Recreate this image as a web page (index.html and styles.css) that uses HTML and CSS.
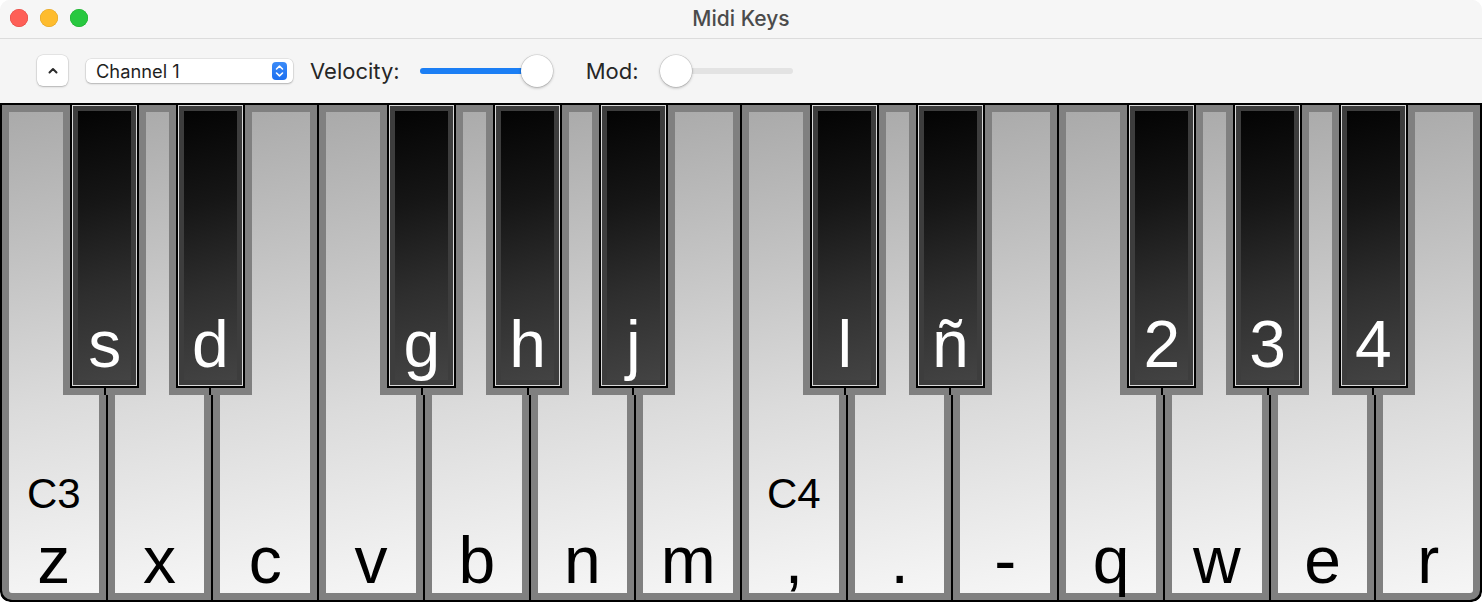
FILE: index.html
```html
<!DOCTYPE html>
<html>
<head>
<meta charset="utf-8">
<title>Midi Keys</title>
<link rel="stylesheet" href="styles.css">
</head>
<body>
<div class="window">
  <div class="titlebar">
    <div class="lights">
      <span class="light red"></span>
      <span class="light yellow"></span>
      <span class="light green"></span>
    </div>
    <div class="title">Midi Keys</div>
    <div></div>
  </div>
  <div class="toolbar">
    <button class="collapse" type="button">
      <svg width="10" height="7" viewBox="0 0 10 7"><path d="M1.5 5.5 L5 2 L8.5 5.5" fill="none" stroke="#2b2b2b" stroke-width="2" stroke-linecap="round" stroke-linejoin="round"/></svg>
    </button>
    <div class="popup">
      <span class="popup-text">Channel 1</span>
      <span class="stepper">
        <svg width="15" height="18" viewBox="0 0 15 18"><path d="M4.5 7 L7.5 4.2 L10.5 7" fill="none" stroke="#fff" stroke-width="1.6" stroke-linecap="round" stroke-linejoin="round"/><path d="M4.5 11 L7.5 13.8 L10.5 11" fill="none" stroke="#fff" stroke-width="1.6" stroke-linecap="round" stroke-linejoin="round"/></svg>
      </span>
    </div>
    <span class="label">Velocity:</span>
    <div class="slider">
      <div class="track"><div class="fill"></div></div>
      <div class="knob knob-end"></div>
    </div>
    <span class="label label-mod">Mod:</span>
    <div class="slider">
      <div class="track"></div>
      <div class="knob knob-start"></div>
    </div>
  </div>
  <div class="keyboard">
    <div class="white">
      <div class="bk"><div class="bk-body"><span>s</span></div></div>
      <span class="octave">C3</span><span class="key">z</span>
    </div>
    <div class="white">
      <div class="bk"><div class="bk-body"><span>d</span></div></div>
      <span class="key">x</span>
    </div>
    <div class="white"><span class="key">c</span></div>
    <div class="white">
      <div class="bk"><div class="bk-body"><span>g</span></div></div>
      <span class="key">v</span>
    </div>
    <div class="white">
      <div class="bk"><div class="bk-body"><span>h</span></div></div>
      <span class="key">b</span>
    </div>
    <div class="white">
      <div class="bk"><div class="bk-body"><span>j</span></div></div>
      <span class="key">n</span>
    </div>
    <div class="white"><span class="key">m</span></div>
    <div class="white">
      <div class="bk"><div class="bk-body"><span>l</span></div></div>
      <span class="octave">C4</span><span class="key">,</span>
    </div>
    <div class="white">
      <div class="bk"><div class="bk-body"><span>ñ</span></div></div>
      <span class="key">.</span>
    </div>
    <div class="white"><span class="key">-</span></div>
    <div class="white">
      <div class="bk"><div class="bk-body"><span>2</span></div></div>
      <span class="key">q</span>
    </div>
    <div class="white">
      <div class="bk"><div class="bk-body"><span>3</span></div></div>
      <span class="key">w</span>
    </div>
    <div class="white">
      <div class="bk"><div class="bk-body"><span>4</span></div></div>
      <span class="key">e</span>
    </div>
    <div class="white"><span class="key">r</span></div>
  </div>
</div>
</body>
</html>
```

FILE: styles.css
```css
* { box-sizing: border-box; }

html, body {
  margin: 0;
  padding: 0;
  background: #ffffff;
}

.window {
  width: 1482px;
  height: 602px;
  border-radius: 10px;
  overflow: hidden;
  background: #f5f5f5;
  display: flex;
  flex-direction: column;
  font-family: Inter, "Noto Sans", sans-serif;
}

/* Title bar */
.titlebar {
  height: 39px;
  flex: none;
  display: grid;
  grid-template-columns: 1fr auto 1fr;
  align-items: center;
  background: #f6f6f6;
  border-bottom: 1px solid #dcdcdc;
}

.lights {
  display: flex;
  gap: 12px;
  padding-left: 10px;
  padding-bottom: 2px;
}

.light {
  width: 18px;
  height: 18px;
  border-radius: 50%;
  display: block;
}
.red { background: #fe5f57; box-shadow: inset 0 0 0 0.5px #e0443e; }
.yellow { background: #febc2e; box-shadow: inset 0 0 0 0.5px #dea123; }
.green { background: #28c840; box-shadow: inset 0 0 0 0.5px #1aab29; }

.title {
  font-size: 21px;
  font-weight: 500;
  color: #4b4b4b;
  padding-bottom: 2px;
}

/* Toolbar */
.toolbar {
  height: 64px;
  flex: none;
  display: flex;
  align-items: center;
  padding-left: 37px;
  padding-bottom: 1px;
  background: #f5f5f5;
}

.collapse {
  width: 31px;
  height: 31px;
  padding: 0;
  border: none;
  border-radius: 6px;
  background: #ffffff;
  box-shadow: 0 0 0 0.5px rgba(0,0,0,0.12), 0 1px 2px rgba(0,0,0,0.22);
  display: flex;
  align-items: center;
  justify-content: center;
  margin-right: 18px;
}

.popup {
  width: 207px;
  height: 24px;
  border-radius: 5px;
  background: #ffffff;
  box-shadow: 0 0 0 0.5px rgba(0,0,0,0.12), 0 1px 2px rgba(0,0,0,0.22);
  display: flex;
  align-items: center;
  justify-content: space-between;
  padding: 0 6px 0 10px;
  margin-right: 17px;
}

.popup-text {
  font-size: 18.3px;
  color: #1f1f1f;
}

.stepper {
  width: 15px;
  height: 18px;
  border-radius: 4px;
  background: linear-gradient(#3b8bf8, #1b6ff0);
  display: flex;
}

.label {
  font-size: 22px;
  color: #262626;
  margin-right: 20px;
}

.label-mod {
  margin-left: 33px;
  margin-right: 21px;
}

.slider {
  position: relative;
  width: 133px;
  height: 32px;
  display: flex;
  align-items: center;
}

.track {
  width: 100%;
  height: 6px;
  border-radius: 3px;
  background: #e3e3e3;
  overflow: hidden;
}

.fill {
  width: 90%;
  height: 100%;
  background: #1b7ef4;
}

.knob {
  position: absolute;
  top: 0;
  width: 32px;
  height: 32px;
  border-radius: 50%;
  background: #ffffff;
  box-shadow: 0 0 0 0.5px rgba(0,0,0,0.14), 0 1px 3px rgba(0,0,0,0.28);
}
.knob-end { right: 0; }
.knob-start { left: 0; }

/* Keyboard */
.keyboard {
  flex: 1;
  display: flex;
  gap: 2px;
  padding: 2px 2px 2px 2px;
  background: #000000;
  overflow: hidden;
  border-radius: 0 0 10px 10px;
  font-family: "Liberation Sans", Arial, sans-serif;
}

.white {
  position: relative;
  flex: 1;
  border: 7px solid #808080;
  background: linear-gradient(168deg, #aaaaaa 0%, #c2c2c2 30%, #dbdbdb 60%, #f6f6f6 100%);
  display: flex;
  flex-direction: column;
  align-items: center;
  justify-content: flex-end;
}
.white:first-child { border-bottom-left-radius: 10px; }
.white:last-child { border-bottom-right-radius: 10px; }

.octave {
  font-size: 42px;
  line-height: 42px;
  color: #000;
  margin-bottom: 12px;
}

.key {
  font-size: 66px;
  line-height: 66px;
  color: #000;
}

/* Black keys: lie over the white keys */
.bk {
  position: absolute;
  top: -7px;
  right: -47.5px;
  width: 83px;
  height: 290px;
  padding: 0 7px 7px 7px;
  background: #808080;
  z-index: 2;
}
.bk::after {
  content: "";
  position: absolute;
  left: calc(50% - 1px);
  bottom: 0;
  width: 2px;
  height: 7px;
  background: #000;
}

.bk-body {
  width: 100%;
  height: 100%;
  border: 2px solid #000;
  border-top: 0;
  background: linear-gradient(165deg, #020202 0%, #161616 35%, #2e2e2e 65%, #454545 100%);
  box-shadow: inset 0 0 0 1px #d8d8d8, inset 0 0 0 6px #3d3d3d;
  display: flex;
  align-items: flex-end;
  justify-content: center;
  padding-bottom: 9px;
}

.bk-body span {
  font-size: 66px;
  line-height: 66px;
  color: #ffffff;
}
```
